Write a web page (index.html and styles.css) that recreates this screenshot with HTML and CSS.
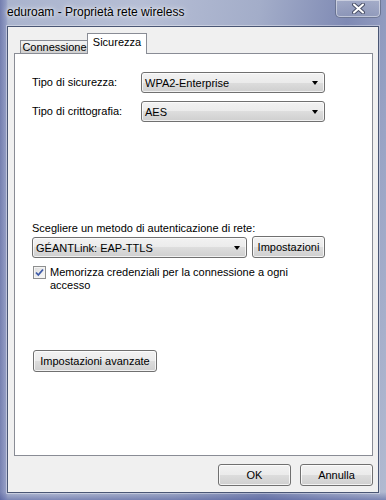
FILE: index.html
```html
<!DOCTYPE html>
<html lang="it">
  <head>
    <meta charset="UTF-8" />
    <title>eduroam - Proprietà rete wireless</title>
    <link rel="stylesheet" href="styles.css">
  </head>
  <body>
    <div class="window">
      <div class="titlebar">
        <span class="title">eduroam - Proprietà rete wireless</span>
        <div class="close">
          <svg width="13" height="11" viewBox="0 0 13 11">
            <path d="M2 1.5 L11 9.5 M11 1.5 L2 9.5" stroke="#4a5068" stroke-width="4" stroke-linecap="round" />
            <path d="M2 1.5 L11 9.5 M11 1.5 L2 9.5" stroke="#ffffff" stroke-width="2" stroke-linecap="round" />
          </svg>
        </div>
      </div>

      <div class="client">
        <div class="tabs">
          <div class="tab">Connessione</div>
          <div class="tab active">Sicurezza</div>
        </div>

        <div class="panel">
          <div class="fields">
            <div class="label">Tipo di sicurezza:</div>
            <div class="combo">
              <span>WPA2-Enterprise</span>
              <span class="arrow"></span>
            </div>
            <div class="label">Tipo di crittografia:</div>
            <div class="combo">
              <span>AES</span>
              <span class="arrow"></span>
            </div>
          </div>

          <div class="auth">
            <div class="auth-label">Scegliere un metodo di autenticazione di rete:</div>
            <div class="auth-row">
              <div class="combo method">
                <span>GÉANTLink: EAP-TTLS</span>
                <span class="arrow"></span>
              </div>
              <div class="btn settings">Impostazioni</div>
            </div>
            <div class="check-row">
              <span class="checkbox">
                <svg width="11" height="11" viewBox="0 0 11 11">
                  <path d="M2 5.5 L4.3 8 L9 2.5" fill="none" stroke="#3d5aa8" stroke-width="1.8" />
                </svg>
              </span>
              <span class="check-text">Memorizza credenziali per la connessione a ogni accesso</span>
            </div>
          </div>

          <div class="btn advanced">Impostazioni avanzate</div>
        </div>

        <div class="footer">
          <div class="btn dialog">OK</div>
          <div class="btn dialog">Annulla</div>
        </div>
      </div>
    </div>
  </body>
</html>
```

FILE: styles.css
```css
* {
  margin: 0;
  padding: 0;
  box-sizing: border-box;
}

body {
  width: 386px;
  height: 500px;
  overflow: hidden;
  font-family: 'Liberation Sans', Arial, sans-serif;
  font-size: 11px;
  color: #000;
}

.window {
  width: 386px;
  height: 500px;
  display: flex;
  flex-direction: column;
  background:
    linear-gradient(to right, rgba(70, 82, 150, 0.55) 0, rgba(110, 120, 180, 0.4) 6px, transparent 8px),
    linear-gradient(to top, rgba(70, 82, 150, 0.5) 0, transparent 8px),
    linear-gradient(100deg, #a9b3cd 0%, #b6bed5 30%, #a3adc9 55%, #7f8ab4 74%, #9aa4c5 86%, #b3bbd1 100%);
}

.titlebar {
  height: 26px;
  display: flex;
  justify-content: space-between;
  align-items: flex-start;
  padding: 0 5px 0 7px;
}

.title {
  margin-top: 5px;
  font-size: 12px;
  line-height: 15px;
  text-shadow: 0 0 6px rgba(255, 255, 255, 0.9), 0 0 3px rgba(255, 255, 255, 0.8);
}

.close {
  width: 46px;
  height: 18px;
  display: flex;
  align-items: center;
  justify-content: center;
  border: 1px solid rgba(70, 80, 110, 0.55);
  border-top: none;
  border-radius: 0 0 5px 5px;
  background: linear-gradient(to bottom, rgba(190, 196, 214, 0.5), rgba(150, 158, 186, 0.5));
  box-shadow: inset 0 0 0 1px rgba(255, 255, 255, 0.45);
}

.client {
  flex: 1;
  margin: 0 7px 7px 7px;
  border: 1px solid #4a5674;
  box-shadow: 0 0 0 1px rgba(255, 255, 255, 0.35);
  background: #f0f0f0;
  padding: 6px 5px 6px 6px;
  display: flex;
  flex-direction: column;
}

.tabs {
  display: flex;
  align-items: flex-end;
  height: 20px;
  padding-left: 6px;
  position: relative;
  z-index: 1;
}

.tab {
  height: 13px;
  line-height: 12px;
  width: 69px;
  text-align: center;
  border: 1px solid #898c95;
  border-bottom: none;
  background: linear-gradient(to bottom, #f2f2f2 0%, #ebebeb 50%, #dddddd 50%, #cfcfcf 100%);
}

.tab.active {
  height: 21px;
  width: 60px;
  margin-left: -2px;
  margin-bottom: -1px;
  line-height: 16px;
  background: #fff;
}

.panel {
  flex: 1;
  background: #fff;
  border: 1px solid #898c95;
  padding: 18px 0 0 17px;
}

.fields {
  display: grid;
  grid-template-columns: 109px 184px;
  row-gap: 8px;
}

.label {
  height: 21px;
  line-height: 21px;
}

.combo {
  height: 21px;
  display: flex;
  align-items: center;
  justify-content: space-between;
  padding: 0 6px 0 3px;
  border: 1px solid #707070;
  border-radius: 3px;
  background: linear-gradient(to bottom, #f2f2f2 0%, #ebebeb 50%, #dddddd 50%, #cfcfcf 100%);
  box-shadow: inset 0 0 0 1px rgba(255, 255, 255, 0.7);
}

.arrow {
  width: 0;
  height: 0;
  border-left: 3.5px solid transparent;
  border-right: 3.5px solid transparent;
  border-top: 4px solid #000;
}

.auth {
  margin-top: 100px;
}

.auth-label {
  line-height: 13px;
  margin-bottom: 2px;
}

.auth-row {
  display: flex;
  gap: 5px;
  align-items: flex-start;
}

.combo.method {
  width: 215px;
}

.btn {
  height: 22px;
  display: flex;
  align-items: center;
  justify-content: center;
  border: 1px solid #707070;
  border-radius: 3px;
  background: linear-gradient(to bottom, #f2f2f2 0%, #ebebeb 50%, #dddddd 50%, #cfcfcf 100%);
  box-shadow: inset 0 0 0 1px rgba(255, 255, 255, 0.75);
}

.settings {
  width: 73px;
  margin-top: -1px;
}

.check-row {
  display: flex;
  gap: 4px;
  margin-top: 8px;
  padding-left: 1px;
  line-height: 13px;
}

.checkbox {
  width: 13px;
  height: 13px;
  flex: none;
  display: flex;
  align-items: center;
  justify-content: center;
  border: 1px solid #8e8f8f;
  background: linear-gradient(135deg, #dcdcdc, #fbfbfb);
  box-shadow: inset 0 0 0 1px #f4f4f4;
}

.check-text {
  width: 240px;
}

.advanced {
  width: 124px;
  margin-top: 58px;
  margin-left: 1px;
}

.footer {
  display: flex;
  justify-content: flex-end;
  gap: 9px;
  margin-top: 8px;
}

.dialog {
  width: 73px;
}
```
